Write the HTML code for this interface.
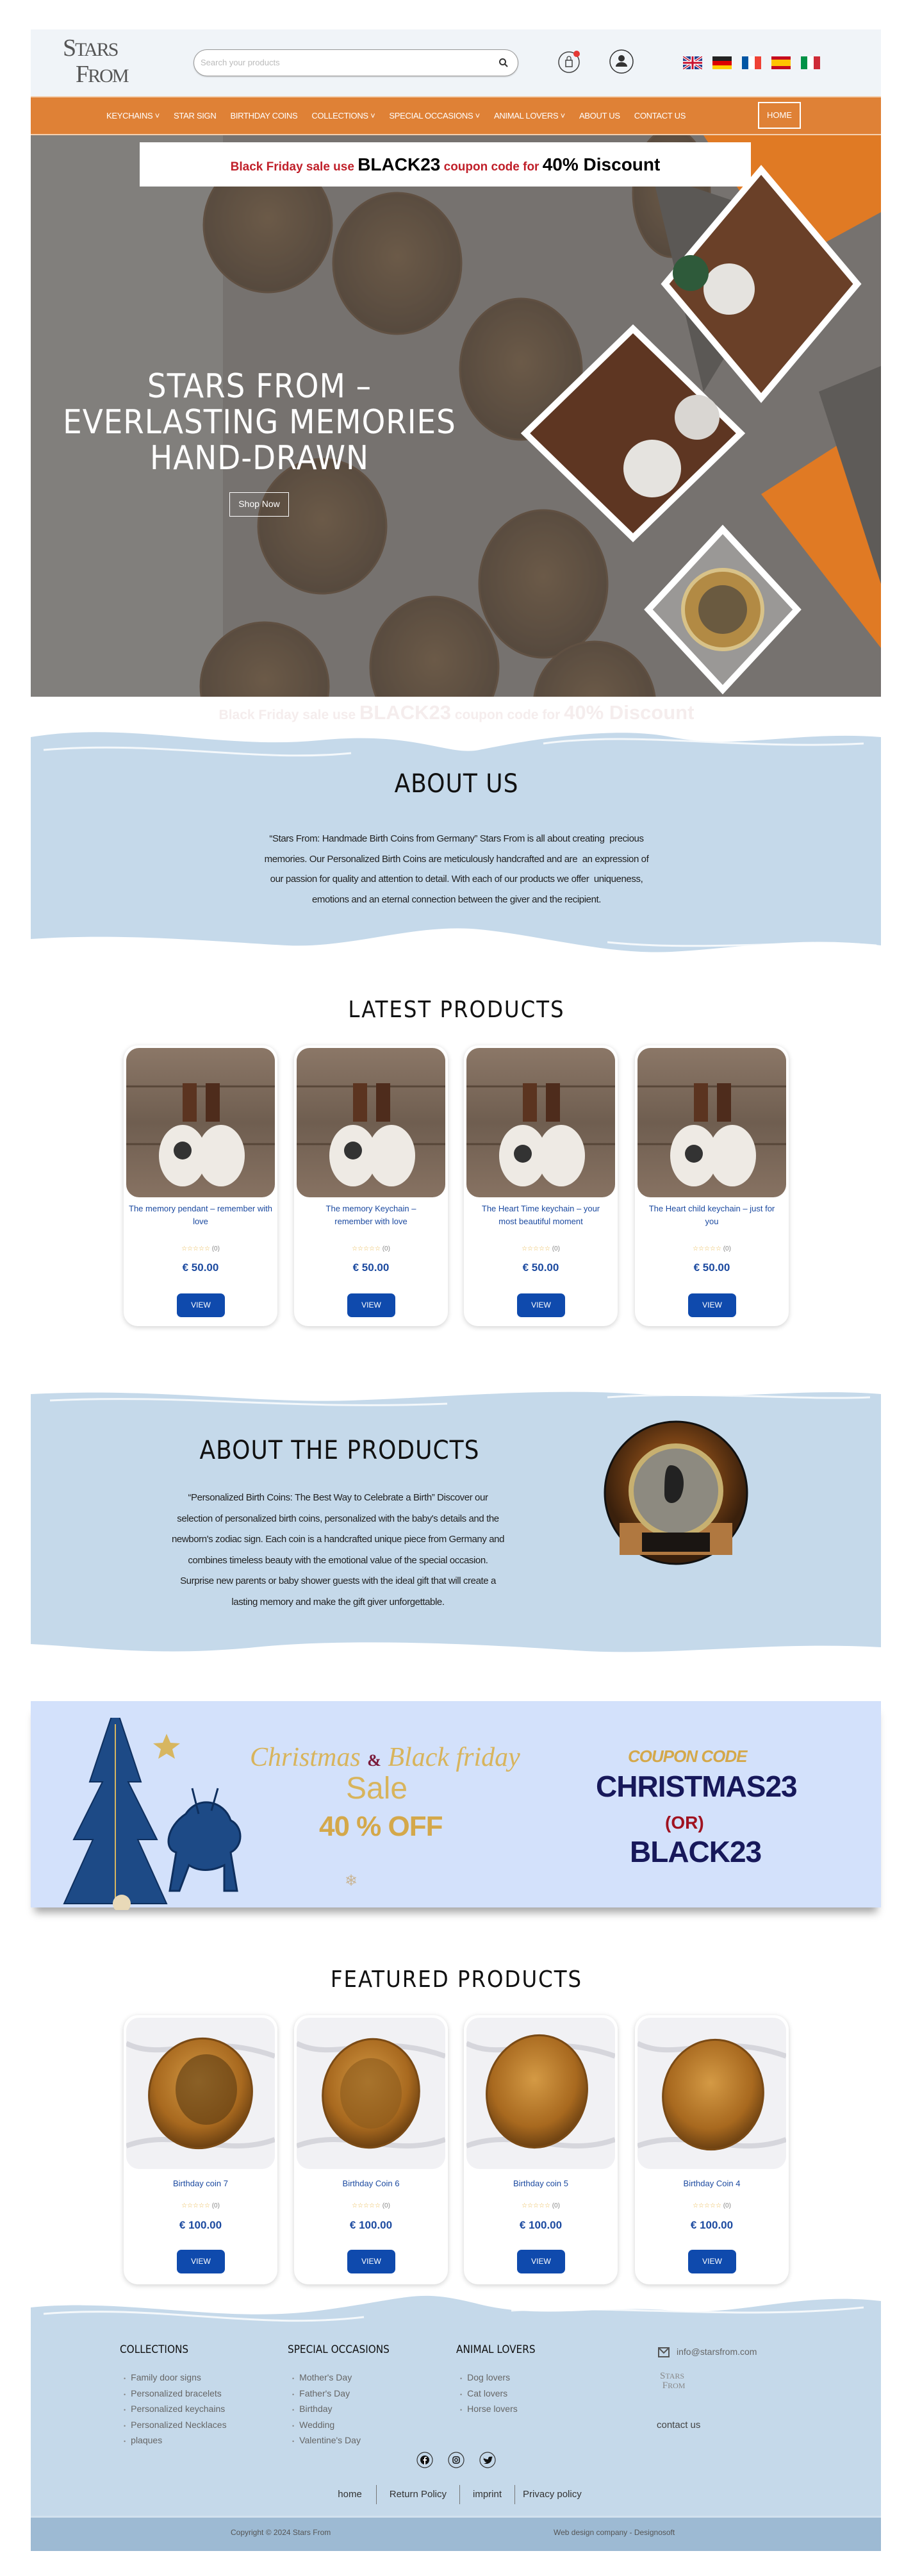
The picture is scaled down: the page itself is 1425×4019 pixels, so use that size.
<!DOCTYPE html>
<html><head><meta charset="utf-8">
<style>
*{margin:0;padding:0;box-sizing:border-box}
body{width:1425px;height:4019px;background:#fff;font-family:"Liberation Sans",sans-serif;position:relative;overflow:hidden}
.abs{position:absolute}
.wrap{position:absolute;left:48px;width:1327px}
.hd{font-family:"DejaVu Sans Condensed","Liberation Sans",sans-serif;font-weight:normal;color:#111;text-align:center;letter-spacing:1px}
.nav a{color:#fff;font-size:13px;text-decoration:none;margin:0 11px;letter-spacing:-.3px;display:inline-block}
.card{position:absolute;width:240px;background:#fff;border-radius:22px;box-shadow:0 2px 8px rgba(0,0,0,.18);text-align:center}
.card .img{position:absolute;left:4px;top:4px;width:232px;border-radius:20px 20px 20px 20px;overflow:hidden}
.card .t{position:absolute;left:0;width:100%;color:#1c4aa0;font-size:13px;line-height:20px}
.card .s{position:absolute;left:0;width:100%;color:#e9b64a;font-size:10px}
.card .s span{color:#888}
.card .p{position:absolute;left:0;width:100%;color:#1c4aa0;font-size:17px;font-weight:bold}
.card .b{position:absolute;left:83px;width:75px;height:37px;background:#0f4aad;border-radius:7px;color:#fff;font-size:12px;line-height:37px}
.foot h4{position:absolute;font-family:"DejaVu Sans Condensed",sans-serif;font-weight:normal;font-size:17px;color:#111}
.foot ul{position:absolute;list-style:none;font-size:14px;color:#666}
.foot li{height:24.5px;line-height:20px}
.foot li:before{content:"•";font-size:9px;margin-right:8px;color:#888}
.para{text-align:center;font-size:15px;color:#222;letter-spacing:-.4px;white-space:nowrap}
</style></head><body>

<!-- header -->
<div class="wrap" style="top:46px;height:104px;background:#f0f4f8"></div>
<div class="abs" style="left:98px;top:56px;font-family:'Liberation Serif',serif;color:#555;line-height:38px;font-size:38px;letter-spacing:-2px">
<div>S<span style="font-size:30px">TARS</span></div><div style="margin-left:20px">F<span style="font-size:30px">ROM</span></div></div>
<div class="abs" style="left:302px;top:77px;width:507px;height:42px;border:1.5px solid #999;border-radius:21px;background:#fff;box-shadow:0 1px 2px rgba(0,0,0,.2)">
<span class="abs" style="left:10px;top:12px;font-size:13px;color:#bbb">Search your products</span>
<svg class="abs" style="right:14px;top:12px" width="16" height="16" viewBox="0 0 16 16"><circle cx="6.5" cy="6.5" r="4.5" fill="none" stroke="#333" stroke-width="2"/><path d="M10 10l4 4" stroke="#333" stroke-width="2"/></svg></div>
<svg class="abs" style="left:870px;top:76px" width="40" height="40" viewBox="0 0 40 40"><circle cx="18" cy="21" r="16" fill="none" stroke="#444" stroke-width="1.5"/><rect x="13" y="18" width="10" height="10" fill="none" stroke="#444" stroke-width="1.5"/><path d="M15 18v-3a3 3 0 016 0v3" fill="none" stroke="#444" stroke-width="1.3"/><circle cx="30" cy="8" r="5" fill="#e53935"/></svg>
<svg class="abs" style="left:950px;top:76px" width="40" height="40" viewBox="0 0 40 40"><circle cx="20" cy="20" r="18" fill="none" stroke="#333" stroke-width="1.5"/><circle cx="20" cy="15" r="5" fill="#333"/><path d="M11 28a9 7 0 0118 0z" fill="#333"/></svg>
<div class="abs" style="left:1066px;top:88px;display:flex;gap:16px">
<svg width="30" height="20" viewBox="0 0 30 20"><rect width="30" height="20" fill="#23408e"/><path d="M0 0L30 20M30 0L0 20" stroke="#fff" stroke-width="4"/><path d="M0 0L30 20M30 0L0 20" stroke="#c8102e" stroke-width="1.5"/><path d="M15 0v20M0 10h30" stroke="#fff" stroke-width="6"/><path d="M15 0v20M0 10h30" stroke="#c8102e" stroke-width="3"/></svg>
<svg width="30" height="20"><rect width="30" height="7" fill="#222"/><rect y="7" width="30" height="7" fill="#dd0000"/><rect y="14" width="30" height="6" fill="#ffce00"/></svg>
<svg width="30" height="20"><rect width="10" height="20" fill="#0055a4"/><rect x="10" width="10" height="20" fill="#fff"/><rect x="20" width="10" height="20" fill="#ef4135"/></svg>
<svg width="30" height="20"><rect width="30" height="20" fill="#c60b1e"/><rect y="5" width="30" height="10" fill="#ffc400"/></svg>
<svg width="30" height="20"><rect width="10" height="20" fill="#009246"/><rect x="10" width="10" height="20" fill="#fff"/><rect x="20" width="10" height="20" fill="#ce2b37"/></svg>
</div>

<!-- nav -->
<div class="wrap" style="top:150px;height:61px;background:#df8136;border-top:2px solid #f4cfae;border-bottom:2px solid #f4cfae"></div>
<div class="abs nav" style="left:155px;top:172px;white-space:nowrap">
<a>KEYCHAINS ˅</a><a>STAR SIGN</a><a>BIRTHDAY COINS</a><a>COLLECTIONS ˅</a><a>SPECIAL OCCASIONS ˅</a><a>ANIMAL LOVERS ˅</a><a>ABOUT US</a><a>CONTACT US</a></div>
<div class="abs" style="left:1183px;top:159px;width:67px;height:42px;border:2px solid #fff;color:#fff;font-size:13px;text-align:center;line-height:38px">HOME</div>

<!-- hero -->
<svg class="abs" style="left:48px;top:211px" width="1327" height="876" viewBox="0 0 1327 876">
<defs><radialGradient id="cg" cx="50%" cy="45%" r="55%"><stop offset="0" stop-color="#6b5238"/><stop offset="1" stop-color="#4a3828"/></radialGradient></defs>
<rect width="1327" height="876" fill="#7b7774"/>
<rect width="300" height="876" fill="#8d8a88"/>
<g fill="url(#cg)" stroke="#5a432e" stroke-width="3">
<ellipse cx="370" cy="140" rx="100" ry="105"/><ellipse cx="572" cy="200" rx="100" ry="110"/><ellipse cx="765" cy="365" rx="95" ry="110"/>
<ellipse cx="455" cy="610" rx="100" ry="105"/><ellipse cx="800" cy="700" rx="100" ry="115"/><ellipse cx="630" cy="830" rx="100" ry="110"/>
<ellipse cx="365" cy="860" rx="100" ry="100"/><ellipse cx="880" cy="890" rx="95" ry="100"/><ellipse cx="1000" cy="90" rx="60" ry="100"/></g>
<rect width="1327" height="876" fill="#6e6b68" opacity=".35"/>
<polygon points="1050,0 1327,0 1327,120 1180,200" fill="#e07a24"/>
<polygon points="1140,560 1327,440 1327,800" fill="#e07a24"/>
<polygon points="970,60 1210,140 1050,400" fill="#5b5855"/>
<polygon points="1230,400 1327,360 1327,700" fill="#5e5b58"/>
<g stroke="#fff" stroke-width="10">
<polygon points="1140,54 1290,232 1140,410 990,232" fill="#6a4028"/>
<polygon points="940,302 1108,465 940,628 772,465" fill="#5e3622"/>
<polygon points="1080,615 1196,740 1080,865 964,740" fill="#9a9896"/></g>
<circle cx="1090" cy="240" r="40" fill="#e5e3df"/><circle cx="1030" cy="215" r="28" fill="#2e5a3a"/>
<circle cx="970" cy="520" r="45" fill="#e5e3df"/><circle cx="1040" cy="440" r="35" fill="#d9d6d2"/>
<circle cx="1080" cy="740" r="62" fill="#b28a44" stroke="#d8c288" stroke-width="6"/><circle cx="1080" cy="740" r="38" fill="#6a5a40"/>
</svg>
<div class="abs" style="left:218px;top:222px;width:954px;height:69px;background:#fff;text-align:center;line-height:69px;font-weight:bold;white-space:nowrap">
<span style="color:#c0202a;font-size:19px">Black Friday sale use </span><span style="font-size:28px">BLACK23</span><span style="color:#c0202a;font-size:19px"> coupon code for </span><span style="font-size:28px">40% Discount</span></div>
<div class="abs" style="left:60px;top:575px;width:690px;text-align:center;color:#fff;font-family:'DejaVu Sans Condensed',sans-serif;font-size:52px;line-height:56px;letter-spacing:1px">STARS FROM –<br>EVERLASTING MEMORIES<br>HAND-DRAWN</div>
<div class="abs" style="left:358px;top:768px;width:93px;height:38px;border:1.5px solid #fff;color:#fff;font-size:14px;text-align:center;line-height:35px">Shop Now</div>
<div class="abs" style="left:0;top:1094px;width:1425px;text-align:center;font-weight:bold;color:#f5eded;white-space:nowrap"><span style="font-size:21px">Black Friday sale use </span><span style="font-size:31px">BLACK23</span><span style="font-size:21px"> coupon code for </span><span style="font-size:31px">40% Discount</span></div>

<!-- about us -->
<svg class="abs" style="left:48px;top:1130px" width="1327" height="375" viewBox="0 0 1327 375" preserveAspectRatio="none">
<path d="M0 20 C150 -5 300 40 450 25 S650 50 700 40 S900 0 1000 20 S1200 10 1327 20 V345 C1200 330 1100 350 1000 355 S800 330 700 320 S500 350 400 345 S150 325 0 335 Z" fill="#c5d9ea"/>
<path d="M20 40 C200 25 350 60 500 45 M800 30 C950 10 1100 40 1300 30 M100 345 C300 335 450 360 600 350 M900 340 C1050 355 1200 335 1320 345" stroke="#fff" stroke-width="3" fill="none" opacity=".8"/></svg>
<div class="abs hd" style="left:0;width:1425px;top:1200px;font-size:40px">ABOUT US</div>
<div class="abs para" style="left:0;width:1425px;top:1293px;line-height:31.5px">“Stars From: Handmade Birth Coins from Germany” Stars From is all about creating &nbsp;precious<br>memories. Our Personalized Birth Coins are meticulously handcrafted and are &nbsp;an expression of<br>our passion for quality and attention to detail. With each of our products we offer &nbsp;uniqueness,<br>emotions and an eternal connection between the giver and the recipient.</div>

<div class="abs hd" style="left:0;width:1425px;top:1555px;font-size:36px;letter-spacing:2px">LATEST PRODUCTS</div>

<svg width="0" height="0" style="position:absolute"><defs>
<linearGradient id="wood" x1="0" y1="0" x2="0" y2="1"><stop offset="0" stop-color="#8b7767"/><stop offset=".5" stop-color="#6f5e50"/><stop offset="1" stop-color="#877262"/></linearGradient>
<radialGradient id="gold" cx="45%" cy="40%" r="60%"><stop offset="0" stop-color="#d49a45"/><stop offset=".7" stop-color="#a8691f"/><stop offset="1" stop-color="#6e4212"/></radialGradient>
</defs></svg>

<!-- cards (latest) -->
<div class="card" style="left:193px;top:1631px;height:438px"><div class="img" style="height:233px"><svg width="232" height="233"><rect width="232" height="233" fill="url(#wood)"/><path d="M0 60h232M0 150h232" stroke="#574638" stroke-width="3"/><rect x="88" y="55" width="22" height="60" fill="#5b3420"/><rect x="124" y="55" width="22" height="60" fill="#4e2c1c"/><ellipse cx="88" cy="168" rx="37" ry="48" fill="#eeeae4"/><ellipse cx="148" cy="168" rx="37" ry="48" fill="#eeeae4"/><circle cx="88" cy="160" r="14" fill="#333"/></svg></div>
<div class="t" style="top:245px">The memory pendant – remember with love</div><div class="s" style="top:312px">☆☆☆☆☆ <span>(0)</span></div><div class="p" style="top:337px">€ 50.00</div><div class="b" style="top:387px">VIEW</div></div>
<div class="card" style="left:459px;top:1631px;height:438px"><div class="img" style="height:233px"><svg width="232" height="233"><rect width="232" height="233" fill="url(#wood)"/><path d="M0 60h232M0 150h232" stroke="#574638" stroke-width="3"/><rect x="88" y="55" width="22" height="60" fill="#5b3420"/><rect x="124" y="55" width="22" height="60" fill="#4e2c1c"/><ellipse cx="88" cy="168" rx="37" ry="48" fill="#eeeae4"/><ellipse cx="148" cy="168" rx="37" ry="48" fill="#eeeae4"/><circle cx="88" cy="160" r="14" fill="#333"/></svg></div>
<div class="t" style="top:245px">The memory Keychain –<br>remember with love</div><div class="s" style="top:312px">☆☆☆☆☆ <span>(0)</span></div><div class="p" style="top:337px">€ 50.00</div><div class="b" style="top:387px">VIEW</div></div>
<div class="card" style="left:724px;top:1631px;height:438px"><div class="img" style="height:233px"><svg width="232" height="233"><rect width="232" height="233" fill="url(#wood)"/><path d="M0 60h232M0 150h232" stroke="#574638" stroke-width="3"/><rect x="88" y="55" width="22" height="60" fill="#5b3420"/><rect x="124" y="55" width="22" height="60" fill="#4e2c1c"/><ellipse cx="88" cy="168" rx="37" ry="48" fill="#eeeae4"/><ellipse cx="148" cy="168" rx="37" ry="48" fill="#eeeae4"/><circle cx="88" cy="165" r="14" fill="#333"/></svg></div>
<div class="t" style="top:245px">The Heart Time keychain – your<br>most beautiful moment</div><div class="s" style="top:312px">☆☆☆☆☆ <span>(0)</span></div><div class="p" style="top:337px">€ 50.00</div><div class="b" style="top:387px">VIEW</div></div>
<div class="card" style="left:991px;top:1631px;height:438px"><div class="img" style="height:233px"><svg width="232" height="233"><rect width="232" height="233" fill="url(#wood)"/><path d="M0 60h232M0 150h232" stroke="#574638" stroke-width="3"/><rect x="88" y="55" width="22" height="60" fill="#5b3420"/><rect x="124" y="55" width="22" height="60" fill="#4e2c1c"/><ellipse cx="88" cy="168" rx="37" ry="48" fill="#eeeae4"/><ellipse cx="148" cy="168" rx="37" ry="48" fill="#eeeae4"/><circle cx="88" cy="165" r="14" fill="#333"/></svg></div>
<div class="t" style="top:245px">The Heart child keychain – just for<br>you</div><div class="s" style="top:312px">☆☆☆☆☆ <span>(0)</span></div><div class="p" style="top:337px">€ 50.00</div><div class="b" style="top:387px">VIEW</div></div>

<!-- about products -->
<svg class="abs" style="left:48px;top:2160px" width="1327" height="440" viewBox="0 0 1327 440" preserveAspectRatio="none">
<path d="M0 15 C200 5 350 30 500 25 S800 5 950 15 S1200 5 1327 15 V410 C1150 400 1000 425 850 415 S500 395 350 410 S100 410 0 405 Z" fill="#c5d9ea"/>
<path d="M30 25 C250 15 400 40 650 30 M900 20 C1050 10 1200 25 1310 20" stroke="#fff" stroke-width="3" fill="none" opacity=".8"/></svg>
<div class="abs hd" style="left:230px;width:600px;top:2240px;font-size:40px">ABOUT THE PRODUCTS</div>
<div class="abs para" style="left:130px;width:795px;top:2321px;line-height:32.5px">“Personalized Birth Coins: The Best Way to Celebrate a Birth” Discover our<br>selection of personalized birth coins, personalized with the baby's details and the<br>newborn's zodiac sign. Each coin is a handcrafted unique piece from Germany and<br>combines timeless beauty with the emotional value of the special occasion.<br>Surprise new parents or baby shower guests with the ideal gift that will create a<br>lasting memory and make the gift giver unforgettable.</div>
<svg class="abs" style="left:942px;top:2216px" width="226" height="226"><defs><radialGradient id="bg2" cx="50%" cy="40%"><stop offset="0" stop-color="#c06a20"/><stop offset="1" stop-color="#3a200c"/></radialGradient></defs><ellipse cx="113" cy="113" rx="111" ry="111" fill="url(#bg2)" stroke="#111" stroke-width="3"/><rect x="25" y="160" width="176" height="50" fill="#b07840"/><circle cx="113" cy="110" r="70" fill="#8d8a80" stroke="#c7b070" stroke-width="8"/><path d="M105 70c20 0 25 30 15 50c-10 15-25 10-25-5c0-20 0-45 10-45z" fill="#222"/><rect x="60" y="175" width="106" height="30" fill="#1a1512"/></svg>

<!-- christmas banner -->
<div class="wrap" style="top:2654px;height:322px;background:#d3e1fb;box-shadow:0 14px 12px -6px rgba(0,0,0,.35)"></div>
<svg class="abs" style="left:80px;top:2680px" width="340" height="300" viewBox="0 0 340 300">
<path d="M100 20 L60 140 L80 140 L35 230 L65 230 L20 330 L180 330 L135 230 L165 230 L120 140 L140 140Z" fill="#1d4a86" stroke="#0e2f5e" stroke-width="2" transform="translate(0,-40)"/>
<path d="M100 10v275" stroke="#d7b660" stroke-width="2"/>
<path d="M180 25l6 14 15 1-12 9 4 15-13-8-13 8 4-15-12-9 15-1z" fill="#d7b660"/>
<path d="M210 150 c20-30 60-20 70 10 c20 10 20 40 0 50 l10 60-20 0 0-40 c-20 10-40 10-55 0 l-15 40-15 0 10-60 c-20-5-15-40 15-60z M230 150 l-10-40 M250 145 l10-35" fill="#1d4a86" stroke="#0e2f5e" stroke-width="3"/>
<circle cx="110" cy="290" r="14" fill="#e8d9b8"/><circle cx="35" cy="315" r="14" fill="#e8d9b8"/></svg>
<div class="abs" style="left:390px;top:2718px;font-family:'Liberation Serif',serif;font-style:italic;font-size:42px;color:#d8b45c;white-space:nowrap">Christmas <span style="color:#7a1a3a;font-size:26px;font-style:normal;font-weight:bold">&amp;</span> Black friday</div>
<div class="abs" style="left:540px;top:2763px;font-size:48px;color:#d8b45c;font-family:'Liberation Sans',sans-serif">Sale</div>
<div class="abs" style="left:498px;top:2825px;font-size:44px;color:#d4a84a;font-weight:bold;letter-spacing:-1px">40 % OFF</div>
<div class="abs" style="left:980px;top:2725px;font-size:26px;color:#d4a84a;font-style:italic;font-weight:bold;letter-spacing:-1px">COUPON CODE</div>
<div class="abs" style="left:930px;top:2760px;font-size:46px;color:#17185a;font-weight:bold;letter-spacing:-1px">CHRISTMAS23</div>
<div class="abs" style="left:1038px;top:2828px;font-size:28px;color:#a01220;font-weight:bold">(OR)</div>
<div class="abs" style="left:983px;top:2862px;font-size:46px;color:#17185a;font-weight:bold;letter-spacing:-1px">BLACK23</div>
<div class="abs" style="left:538px;top:2920px;font-size:24px;color:#c9b595">❄</div>

<div class="abs hd" style="left:0;width:1425px;top:3068px;font-size:36px;letter-spacing:2px">FEATURED PRODUCTS</div>

<!-- featured cards -->
<div class="card" style="left:193px;top:3144px;height:420px"><div class="img" style="height:236px"><svg width="232" height="236"><rect width="232" height="236" fill="#f1f1f4"/><path d="M0 40c60 30 120-20 232 20M0 200c80-30 150 20 232-10" stroke="#d6d6dc" stroke-width="8" fill="none"/><ellipse cx="116" cy="118" rx="80" ry="86" fill="url(#gold)" stroke="#7a4a15" stroke-width="3" transform="rotate(15 116 118)"/><ellipse cx="125" cy="112" rx="48" ry="55" fill="#5a3a12" opacity=".6"/></svg></div>
<div class="t" style="top:253px">Birthday coin 7</div><div class="s" style="top:292px">☆☆☆☆☆ <span>(0)</span></div><div class="p" style="top:318px">€ 100.00</div><div class="b" style="top:366px">VIEW</div></div>
<div class="card" style="left:459px;top:3144px;height:420px"><div class="img" style="height:236px"><svg width="232" height="236"><rect width="232" height="236" fill="#f1f1f4"/><path d="M0 40c60 30 120-20 232 20M0 200c80-30 150 20 232-10" stroke="#d6d6dc" stroke-width="8" fill="none"/><ellipse cx="116" cy="118" rx="75" ry="85" fill="url(#gold)" stroke="#7a4a15" stroke-width="3" transform="rotate(10 116 118)"/><ellipse cx="116" cy="118" rx="48" ry="55" fill="#8a5a1c" opacity=".6"/></svg></div>
<div class="t" style="top:253px">Birthday Coin 6</div><div class="s" style="top:292px">☆☆☆☆☆ <span>(0)</span></div><div class="p" style="top:318px">€ 100.00</div><div class="b" style="top:366px">VIEW</div></div>
<div class="card" style="left:724px;top:3144px;height:420px"><div class="img" style="height:236px"><svg width="232" height="236"><rect width="232" height="236" fill="#f1f1f4"/><path d="M0 40c60 30 120-20 232 20M0 200c80-30 150 20 232-10" stroke="#d6d6dc" stroke-width="8" fill="none"/><ellipse cx="110" cy="115" rx="78" ry="88" fill="url(#gold)" stroke="#7a4a15" stroke-width="3" transform="rotate(12 110 115)"/></svg></div>
<div class="t" style="top:253px">Birthday coin 5</div><div class="s" style="top:292px">☆☆☆☆☆ <span>(0)</span></div><div class="p" style="top:318px">€ 100.00</div><div class="b" style="top:366px">VIEW</div></div>
<div class="card" style="left:991px;top:3144px;height:420px"><div class="img" style="height:236px"><svg width="232" height="236"><rect width="232" height="236" fill="#f1f1f4"/><path d="M0 40c60 30 120-20 232 20M0 200c80-30 150 20 232-10" stroke="#d6d6dc" stroke-width="8" fill="none"/><ellipse cx="118" cy="120" rx="78" ry="86" fill="url(#gold)" stroke="#7a4a15" stroke-width="3" transform="rotate(12 118 120)"/></svg></div>
<div class="t" style="top:253px">Birthday Coin 4</div><div class="s" style="top:292px">☆☆☆☆☆ <span>(0)</span></div><div class="p" style="top:318px">€ 100.00</div><div class="b" style="top:366px">VIEW</div></div>

<!-- footer -->
<svg class="abs" style="left:48px;top:3575px" width="1327" height="360" viewBox="0 0 1327 360" preserveAspectRatio="none">
<path d="M0 25 C150 10 300 50 450 30 S600 -5 700 20 S900 20 1000 30 S1200 0 1327 15 V360 H0Z" fill="#c5d9ea"/>
<path d="M20 35 C200 20 350 60 520 40 M750 30 C900 20 1100 45 1300 25" stroke="#fff" stroke-width="3" fill="none" opacity=".8"/></svg>
<div class="foot">
<h4 style="left:187px;top:3656px">COLLECTIONS</h4>
<h4 style="left:449px;top:3656px">SPECIAL OCCASIONS</h4>
<h4 style="left:712px;top:3656px">ANIMAL LOVERS</h4>
<ul style="left:193px;top:3699px"><li>Family door signs</li><li>Personalized bracelets</li><li>Personalized keychains</li><li>Personalized Necklaces</li><li>plaques</li></ul>
<ul style="left:456px;top:3699px"><li>Mother's Day</li><li>Father's Day</li><li>Birthday</li><li>Wedding</li><li>Valentine's Day</li></ul>
<ul style="left:718px;top:3699px"><li>Dog lovers</li><li>Cat lovers</li><li>Horse lovers</li></ul>
</div>
<svg class="abs" style="left:1027px;top:3662px" width="18" height="16"><rect x="1" y="1" width="16" height="14" fill="none" stroke="#555" stroke-width="2"/><path d="M2 2l7 7 7-7" fill="none" stroke="#555" stroke-width="2"/></svg>
<div class="abs" style="left:1056px;top:3661px;font-size:14px;color:#666">info@starsfrom.com</div>
<div class="abs" style="left:1030px;top:3700px;font-family:'Liberation Serif',serif;color:#888;font-size:15px;line-height:15px">S<span style="font-size:12px">TARS</span><br>&nbsp;F<span style="font-size:12px">ROM</span></div>
<div class="abs" style="left:1025px;top:3775px;font-size:15px;color:#444">contact us</div>
<svg class="abs" style="left:650px;top:3825px" width="130" height="26"><g fill="none" stroke="#333" stroke-width="1.2"><circle cx="13" cy="13" r="12"/><circle cx="62" cy="13" r="12"/><circle cx="111" cy="13" r="12"/></g><circle cx="13" cy="13" r="7" fill="#111"/><path d="M14 20v-6h2v-2h-2v-1.5c0-.7.3-1 1-1h1.2V8H15c-2 0-3 1-3 3v1h-1.5v2H12v6z" fill="#fff"/><rect x="57" y="8" width="10" height="10" rx="3" fill="none" stroke="#111" stroke-width="1.5"/><circle cx="62" cy="13" r="2.3" fill="none" stroke="#111" stroke-width="1.3"/><path d="M104 9c2 2 5 3 8 3c-.5-3 2-5 4.5-4l2-1-1 2 1.5 0c-1 1-1.5 1.5-1.5 1.5c0 6-5 10-13 8c2 0 4-1 5-2c-2 0-3-1-3.5-2h1.5c-2-.5-3-2-3-3.5l1.5.5c-1.5-1-2-3-1-4z" fill="#111"/></svg>
<div class="abs" style="left:0;top:3877px;width:1425px;display:flex;justify-content:center;font-size:15px;color:#333">
<span style="padding:0 22px;border-right:1px solid #777;line-height:30px">home</span><span style="padding:0 20px;border-right:1px solid #777;line-height:30px">Return Policy</span><span style="padding:0 20px;border-right:1px solid #777;line-height:30px">imprint</span><span style="padding:0 12px;line-height:30px">Privacy policy</span></div>
<div class="wrap" style="top:3925px;height:55px;background:#9dbad3;border-top:3px solid #d2e1ee"></div>
<div class="abs" style="left:360px;top:3944px;font-size:12px;color:#555">Copyright © 2024 Stars From</div>
<div class="abs" style="left:864px;top:3944px;font-size:12px;color:#555">Web design company - Designosoft</div>
</body></html>
